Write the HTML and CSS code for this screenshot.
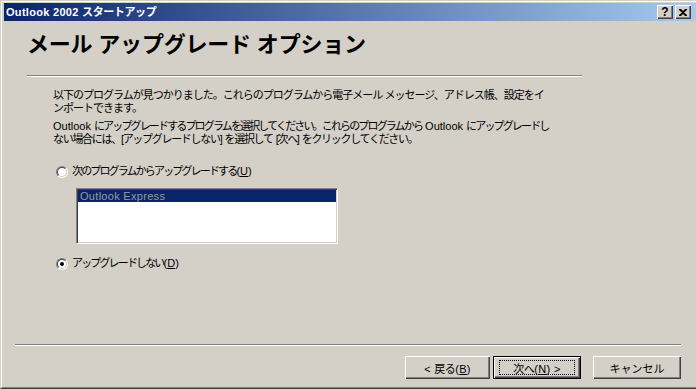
FILE: index.html
```html
<!DOCTYPE html>
<html lang="ja">
<head>
    <meta charset="UTF-8">
    <title>Outlook 2002 スタートアップ</title>
    <link rel="stylesheet" href="styles.css">
</head>
<body>
    <div class="window">
        <div class="frame">
            <div class="titlebar">
                <span class="title"><span class="en">Outlook 2002 </span><span class="jp">スタートアップ</span></span>
                <div class="caption-btns">
                    <span class="cap-btn help">?</span>
                    <span class="cap-btn close">
                        <svg width="8" height="7" viewBox="0 0 8 7">
                            <path d="M0 0h2l2 2 2-2h2v1L5 3.5 8 6v1H6L4 5 2 7H0V6l3-2.5L0 1z" fill="#000"/>
                        </svg>
                    </span>
                </div>
            </div>

            <div class="dialog">
                <h1 class="heading">メール アップグレード オプション</h1>
                <div class="rule top-rule"></div>

                <div class="main">
                    <p class="para">以下のプログラムが見つかりました。これらのプログラムから電子メール メッセージ、アドレス帳、設定をイ<br>ンポートできます。</p>
                    <p class="para kana">
                        <span class="line-a"><span class="en">Outlook </span>にアップグレードするプログラムを選択してください。これらのプログラムから<span class="en"> Outlook </span>にアップグレードし</span><br><span class="line-b">ない場合には、[アップグレードしない]<span class="en"> </span>を選択して<span class="en"> </span>[次へ]<span class="en"> </span>をクリックしてください。</span>
                    </p>

                    <label class="option first">
                        <span class="radio"></span>
                        <span>次のプログラムからアップグレードする<span class="en">(<u>U</u>)</span></span>
                    </label>

                    <div class="listbox">
                        <div class="list-item selected">Outlook Express</div>
                    </div>

                    <label class="option last">
                        <span class="radio on"></span>
                        <span>アップグレードしない<span class="en">(<u>D</u>)</span></span>
                    </label>
                </div>

                <div class="footer">
                    <div class="rule bottom-rule"></div>
                    <div class="buttons">
                        <button class="btn back"><span class="en">&lt; </span>戻る<span class="en">(<u>B</u>)</span></button>
                        <button class="btn next default">次へ<span class="en">(<u>N</u>) &gt;</span></button>
                        <button class="btn cancel">キャンセル</button>
                    </div>
                </div>
            </div>
        </div>
    </div>
</body>
</html>
```

FILE: styles.css
```css
/* Windows 2000 のシステムカラー */
:root {
    --face: #D4D0C8;
    --light: #FFFFFF;
    --shadow: #808080;
    --dark: #404040;
    --navy: #0A246A;
    --sky: #A6CAF0;
}

html, body {
    margin: 0;
    padding: 0;
    overflow: hidden;
}

body {
    width: 696px;
    height: 389px;
    background-color: var(--face);
    font-family: "Liberation Sans", "Noto Sans CJK JP", sans-serif;
    font-size: 11px;
    letter-spacing: -1px;
    color: #000;
}

/* 英数字は詰めない */
.en {
    letter-spacing: 0;
}

/* ウィンドウ枠 */
.window {
    height: 389px;
    box-sizing: border-box;
    border-top: 1px solid var(--face);
    border-left: 1px solid var(--face);
    border-bottom: 1px solid var(--dark);
}

.frame {
    height: 100%;
    box-sizing: border-box;
    border-top: 1px solid var(--light);
    border-left: 1px solid var(--light);
    border-bottom: 1px solid var(--shadow);
    padding: 1px 0 0 2px;
    display: flex;
    flex-direction: column;
}

/* タイトルバー */
.titlebar {
    height: 18px;
    flex-shrink: 0;
    display: flex;
    align-items: center;
    justify-content: space-between;
    background: linear-gradient(to right, var(--navy), var(--sky));
    padding-left: 2px;
}

.title {
    color: #fff;
    font-weight: bold;
    font-size: 11px;
    line-height: 14px;
    white-space: nowrap;
}

.title .en {
    letter-spacing: 0.3px;
}

.title .jp {
    letter-spacing: -0.4px;
}

.caption-btns {
    display: flex;
    gap: 2px;
    margin-right: 5px;
}

.cap-btn {
    width: 16px;
    height: 14px;
    box-sizing: border-box;
    background: var(--face);
    box-shadow: inset 1px 1px var(--light), inset -1px -1px var(--dark), inset -2px -2px var(--shadow);
    display: flex;
    align-items: center;
    justify-content: center;
    font-weight: bold;
    font-size: 12px;
    line-height: 12px;
    letter-spacing: 0;
    font-family: "Liberation Sans", sans-serif;
}

/* ダイアログ本体 */
.dialog {
    flex: 1;
    display: flex;
    flex-direction: column;
}

.heading {
    margin: 12px 0 0 23px;
    font-size: 22px;
    line-height: 24px;
    font-weight: bold;
    letter-spacing: -0.2px;
}

.rule {
    height: 0;
    border-top: 1px solid var(--shadow);
    border-bottom: 1px solid var(--light);
}

.top-rule {
    width: 555px;
    margin: 18px 0 0 23px;
}

.main {
    padding-left: 49px;
}

.para {
    margin: 12px 0 0 0;
    line-height: 13px;
    white-space: nowrap;
}

.para + .para {
    margin-top: 5px;
}

.para .line-a {
    letter-spacing: -1.85px;
}

.para .line-b {
    letter-spacing: -1.3px;
}

.para .en {
    letter-spacing: 0;
}

.option {
    display: flex;
    align-items: center;
    gap: 4px;
    margin-left: 3px;
    line-height: 13px;
    letter-spacing: -1.85px;
}

.option .en {
    letter-spacing: 0;
}

.option.first {
    margin-top: 19px;
}

.option.last {
    margin-top: 13px;
}

.radio {
    width: 12px;
    height: 12px;
    box-sizing: border-box;
    border-radius: 50%;
    border: 1px solid;
    border-color: var(--shadow) var(--light) var(--light) var(--shadow);
    position: relative;
    flex-shrink: 0;
}

.radio::before {
    content: "";
    position: absolute;
    inset: 0;
    border-radius: 50%;
    border: 1px solid;
    border-color: var(--dark) var(--face) var(--face) var(--dark);
    background: #fff;
}

.radio.on::after {
    content: "";
    position: absolute;
    width: 4px;
    height: 4px;
    left: 3px;
    top: 3px;
    border-radius: 50%;
    background: #000;
}

/* リストボックス */
.listbox {
    width: 262px;
    height: 56px;
    box-sizing: border-box;
    margin: 10px 0 0 23px;
    background: #fff;
    border: 1px solid;
    border-color: var(--shadow) var(--light) var(--light) var(--shadow);
    box-shadow: inset 1px 1px var(--dark), inset -1px -1px var(--face);
    padding: 1px;
}

.list-item {
    height: 12px;
    line-height: 12px;
    padding-left: 2px;
    letter-spacing: 0.3px;
}

.list-item.selected {
    background: var(--navy);
    color: #9a9a9a;
}

/* 下部ボタン */
.footer {
    margin-top: auto;
    padding-bottom: 8px;
}

.bottom-rule {
    width: 666px;
    margin-left: 11px;
}

.buttons {
    display: flex;
    justify-content: flex-end;
    margin-top: 10px;
    padding-right: 15px;
}

.btn {
    height: 23px;
    padding: 0;
    border: none;
    background: var(--face);
    font: inherit;
    letter-spacing: -0.5px;
    color: #000;
    box-shadow: inset 1px 1px var(--light), inset -1px -1px var(--dark), inset -2px -2px var(--shadow);
    position: relative;
}

.btn .en {
    letter-spacing: 0.3px;
}

.back {
    width: 85px;
}

.next {
    width: 88px;
    margin-left: 3px;
}

.cancel {
    width: 88px;
    margin-left: 12px;
    letter-spacing: 0;
}

.btn.default {
    border: 1px solid #000;
}

.btn.default::after {
    content: "";
    position: absolute;
    inset: 3px 5px;
    border: 1px dotted #000;
}
```
